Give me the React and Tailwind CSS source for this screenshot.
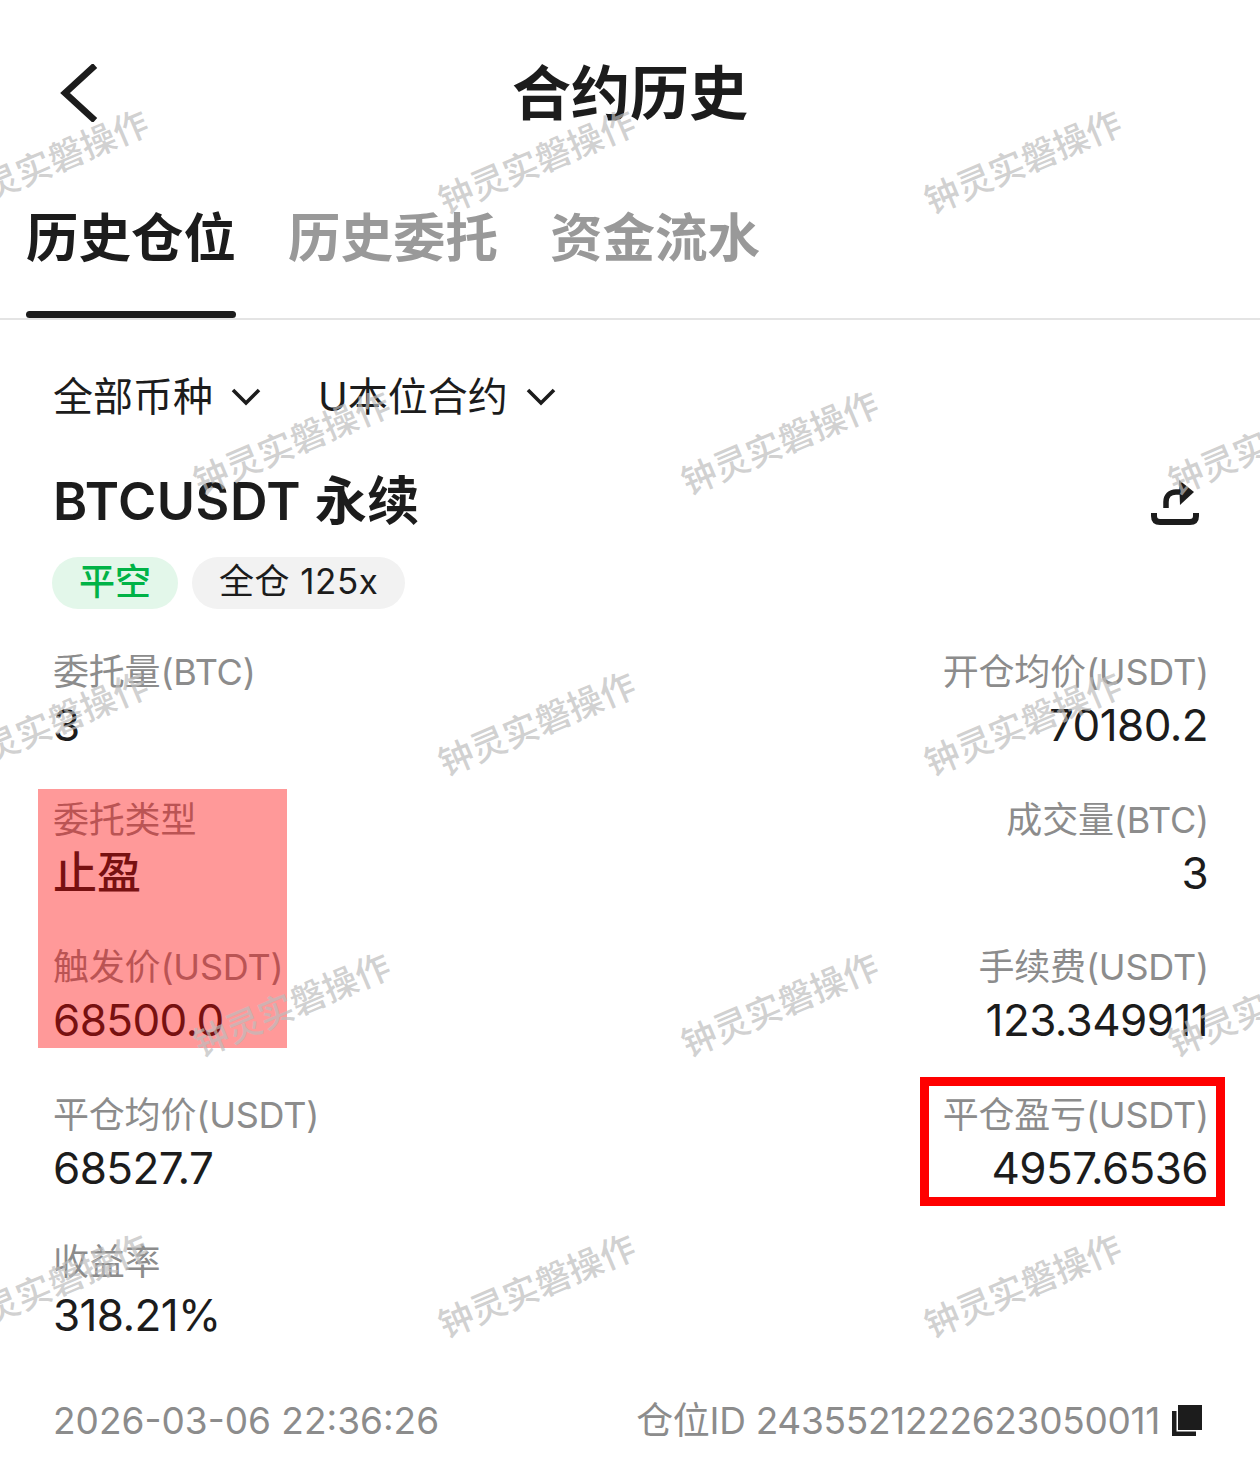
const font = { fontFamily: '"Inter","Noto Sans CJK SC",sans-serif' };

const WATERMARKS = [
  [50, 162], [537, 162], [1023, 162],
  [292, 443], [780, 443], [1267, 443],
  [50, 724], [537, 724], [1023, 724],
  [292, 1005], [780, 1005], [1267, 1005],
  [50, 1286], [537, 1286], [1023, 1286],
];

function Stat({ label, value, right, strong }) {
  return (
    <div className={right ? "flex flex-col items-end" : "flex flex-col items-start"}>
      <div className="h-[53px] text-[36px] leading-[54px] tracking-[-0.2px] text-[#8c8c8c]">{label}</div>
      <div className={strong ? "h-[54px] text-[44px] leading-[54px] font-medium text-[#1c1c1c]" : right ? "mr-[1px] h-[54px] text-[44px] leading-[54px] text-[#1c1c1c] tracking-[-0.6px]" : "h-[54px] text-[44px] leading-[54px] text-[#1c1c1c] tracking-[-0.6px]"}>{value}</div>
    </div>
  );
}

function Row({ left, right }) {
  return (
    <div className="flex h-[147.5px] items-start justify-between">
      {left ? <Stat {...left} /> : <div />}
      {right ? <Stat {...right} right /> : <div />}
    </div>
  );
}

function Chevron() {
  return (
    <svg width="30" height="18" viewBox="0 0 30 18" fill="none" className="ml-[18px]">
      <path d="M2 2 L15 15 L28 2" stroke="#1c1c1c" strokeWidth="3.6" />
    </svg>
  );
}

export default function App() {
  return (
    <div className="relative h-[1482px] w-[1260px] overflow-hidden bg-white" style={font}>
      <header className="grid h-[186px] grid-cols-[1fr_auto_1fr] items-center">
        <div className="pl-[60px]">
          <svg width="38" height="58" viewBox="0 0 38 58" fill="none">
            <path d="M35 1.5 L5 29 L35 56.5" stroke="#1c1c1c" strokeWidth="6.5" />
          </svg>
        </div>
        <h1 className="text-[59px] font-bold leading-none text-[#1c1c1c]">合约历史</h1>
        <div />
      </header>

      <nav className="flex h-[134px] items-start gap-[52px] border-b-2 border-[#e4e4e4] pl-[26px]">
        <div className="relative h-[132px]">
          <div className="pt-[20px] text-[52.5px] font-bold leading-[64px] text-[#1c1c1c]">历史仓位</div>
          <div className="absolute bottom-0 left-0 h-[7px] w-full rounded-full bg-[#1c1c1c]" />
        </div>
        <div className="pt-[20px] text-[52.5px] font-bold leading-[64px] text-[#999999]">历史委托</div>
        <div className="pt-[20px] text-[52.5px] font-bold leading-[64px] text-[#999999]">资金流水</div>
      </nav>

      <main className="pl-[53px] pr-[51px]">
        <div className="mt-[54px] flex h-[46px] items-center text-[40px] leading-none text-[#1c1c1c]">
          <span>全部币种</span>
          <Chevron />
          <span className="ml-[57px]">U本位合约</span>
          <Chevron />
        </div>

        <div className="mt-[52px] flex h-[60px] items-center justify-between">
          <div className="text-[52px] font-semibold leading-none tracking-[0.5px] text-[#1c1c1c]">BTCUSDT 永续</div>
          <svg width="48" height="46" viewBox="0 0 48 46" fill="none" className="mr-[10px]">
            <path d="M15 29 V23 C15 17 19 13 25 13 H32" stroke="#1c1c1c" strokeWidth="5.5" />
            <path d="M28 1 L43 13 L29 26 Z" fill="#1c1c1c" />
            <path d="M3 34 V37 C3 41 5 43 9 43 H39 C43 43 45 41 45 37 V34" stroke="#1c1c1c" strokeWidth="6" />
          </svg>
        </div>

        <div className="-ml-[1px] mt-[25px] flex h-[52px] gap-[14px]">
          <span className="flex items-center rounded-[26px] bg-[#e3f7ea] px-[27px] pb-[3px] text-[36px] leading-none font-medium text-[#00b347]">平空</span>
          <span className="flex items-center rounded-[26px] bg-[#f2f2f2] px-[27px] pb-[3px] text-[35px] leading-none tracking-[0.5px] text-[#1c1c1c]">全仓 125x</span>
        </div>

        <div className="mt-[36px]">
          <Row left={{ label: "委托量(BTC)", value: "3" }} right={{ label: "开仓均价(USDT)", value: "70180.2" }} />
          <Row left={{ label: "委托类型", value: "止盈", strong: true }} right={{ label: "成交量(BTC)", value: "3" }} />
          <Row left={{ label: "触发价(USDT)", value: "68500.0" }} right={{ label: "手续费(USDT)", value: "123.349911" }} />
          <Row left={{ label: "平仓均价(USDT)", value: "68527.7" }} right={{ label: "平仓盈亏(USDT)", value: "4957.6536" }} />
          <Row left={{ label: "收益率", value: "318.21%" }} />
        </div>

        <footer className="mt-[13px] flex h-[50px] items-center justify-between text-[37px] leading-none text-[#8c8c8c]">
          <span>2026-03-06 22:36:26</span>
          <span className="flex items-center gap-[12px]">
            <span className="tracking-[-0.3px]">仓位ID 2435521222623050011</span>
            <svg width="30" height="31" viewBox="0 0 30 31" className="mr-[7px]">
              <rect x="6" y="0" width="24" height="25" fill="#1c1c1c" />
              <path d="M0 6 H4.5 V26.5 H24 V31 H0 Z" fill="#1c1c1c" />
            </svg>
          </span>
        </footer>
      </main>

      <div className="absolute left-[38px] top-[789px] h-[259px] w-[249px] bg-[#ff0000]/40" />
      <div className="absolute left-[920px] top-[1077px] h-[129px] w-[305px] border-[9px] border-[#ff0000]" />

      {WATERMARKS.map(([x, y]) => (
        <div
          key={`${x}-${y}`}
          className="pointer-events-none absolute whitespace-nowrap text-[35px] font-medium leading-none text-[#bdbdbd]/70"
          style={{ left: x, top: y, transform: "translate(-50%,-50%) rotate(-23deg)" }}
        >
          钟灵实磐操作
        </div>
      ))}
    </div>
  );
}
